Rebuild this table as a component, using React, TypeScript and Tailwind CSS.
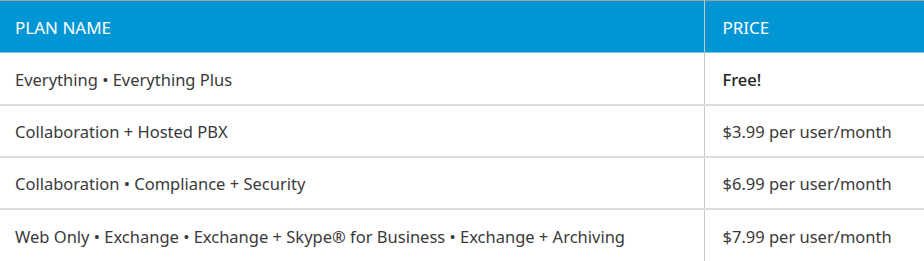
const rows = [
  { plan: 'Everything • Everything Plus', price: 'Free!', strong: true },
  { plan: 'Collaboration + Hosted PBX', price: '$3.99 per user/month' },
  { plan: 'Collaboration • Compliance + Security', price: '$6.99 per user/month' },
  { plan: 'Web Only • Exchange • Exchange + Skype® for Business • Exchange + Archiving', price: '$7.99 per user/month' },
]

export default function App() {
  return (
    <div className="w-[924px] h-[261px] overflow-hidden bg-white font-['Noto_Sans',sans-serif]">
      <table className="w-full border-collapse border-t border-t-[#a3a3a3]">
        <thead>
          <tr className="h-[52px] bg-[#0096d6] text-white text-[17px] uppercase text-left">
            <th className="font-normal pl-[15px] pt-[2px] border-b border-b-[#7fcaeb] w-[704px]">Plan Name</th>
            <th className="font-normal pl-[18px] pt-[2px] border-b border-b-[#7fcaeb] border-l border-l-[#c8c8c8]">Price</th>
          </tr>
        </thead>
        <tbody className="text-[16.5px] text-[#3a3a3a]">
          {rows.map((r, i) => (
            <tr key={i} className="h-[52px] border-t-2 border-t-[#dcdcdc] first:border-t-0">
              <td className="pl-[15px] pt-[4px]">{r.plan}</td>
              <td className={`pl-[18px] pt-[4px] border-l border-l-[#c8c8c8] ${r.strong ? 'font-medium text-[#222]' : ''}`}>{r.price}</td>
            </tr>
          ))}
        </tbody>
      </table>
    </div>
  )
}
